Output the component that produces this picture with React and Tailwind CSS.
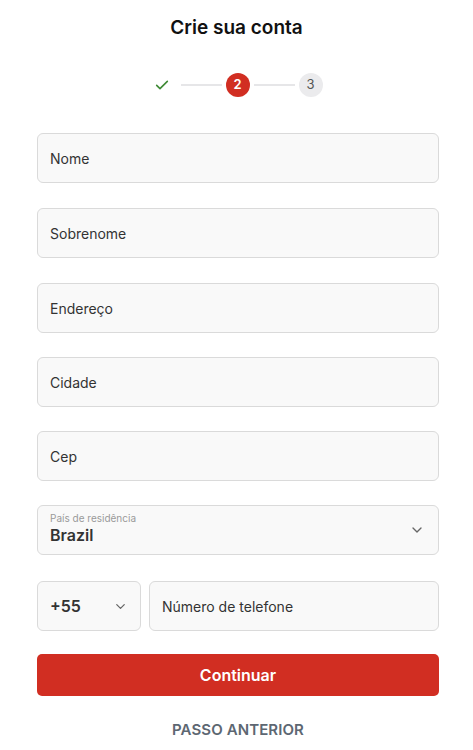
import { ChevronDown } from "lucide-react";

const fields = ["Nome", "Sobrenome", "Endereço", "Cidade", "Cep"];

const Stepper = () => (
  <div className="flex items-center justify-center mt-[32px]">
    <svg width="16" height="16" viewBox="0 0 24 24" fill="none" className="mx-[3px]">
      <path d="M4 12.5l5 5L20 6.5" stroke="#3f8a35" strokeWidth="2.4" strokeLinecap="round" strokeLinejoin="round" />
    </svg>
    <div className="w-[41px] h-[2px] bg-[#e6e6e8] ml-[8px] mr-[4px]" />
    <div className="w-6 h-6 rounded-full bg-[#d12e22] text-white text-[13px] font-semibold flex items-center justify-center">
      2
    </div>
    <div className="w-[41px] h-[2px] bg-[#e6e6e8] mx-[4px]" />
    <div className="w-6 h-6 rounded-full bg-[#ebebed] text-[#555] text-[13px] flex items-center justify-center">
      3
    </div>
  </div>
);

export default function App() {
  return (
    <div className="w-[473px] h-[750px] bg-white font-['Inter',sans-serif] text-[#222] overflow-hidden">
      <h1 className="text-center text-[19px] font-semibold pt-[15px] leading-[26px] text-[#111]">
        Crie sua conta
      </h1>
      <Stepper />
      <form className="pl-[37px] pr-[34px] mt-[36px] flex flex-col gap-[25px]">
        {fields.map((f, i) => (
          <div
            key={f}
            className={`h-[50px] rounded-[6px] border border-[#dadada] bg-[#f9f9f9] flex items-center px-[12px] text-[14px] text-[#333] ${
              i > 2 ? "mt-[-1px]" : ""
            }`}
          >
            {f}
          </div>
        ))}
        <div className="h-[50px] mt-[-1px] rounded-[6px] border border-[#dadada] bg-[#f9f9f9] flex items-center justify-between px-[12px]">
          <div className="flex flex-col">
            <span className="text-[10px] text-[#999] leading-[12px] mt-[-2px]">País de residência</span>
            <span className="text-[16px] font-semibold text-[#333] leading-[22px]">Brazil</span>
          </div>
          <ChevronDown size={16} color="#666" strokeWidth={2} className="mr-[1px]" />
        </div>
        <div className="flex gap-[8px] mt-[1px]">
          <div className="w-[104px] h-[50px] rounded-[6px] border border-[#dadada] bg-[#f9f9f9] flex items-center justify-between px-[12px]">
            <span className="text-[16px] font-semibold text-[#333]">+55</span>
            <ChevronDown size={15} color="#666" strokeWidth={2} />
          </div>
          <div className="flex-1 h-[50px] rounded-[6px] border border-[#dadada] bg-[#f9f9f9] flex items-center px-[12px] text-[14px] text-[#333]">
            Número de telefone
          </div>
        </div>
        <button
          type="button"
          className="h-[42px] mt-[-2px] rounded-[5px] bg-[#d12e22] text-white text-[16px] font-semibold"
        >
          Continuar
        </button>
        <div className="text-center text-[15px] font-semibold text-[#5d6772] mt-[-2px] tracking-[0.1px]">
          PASSO ANTERIOR
        </div>
      </form>
    </div>
  );
}
